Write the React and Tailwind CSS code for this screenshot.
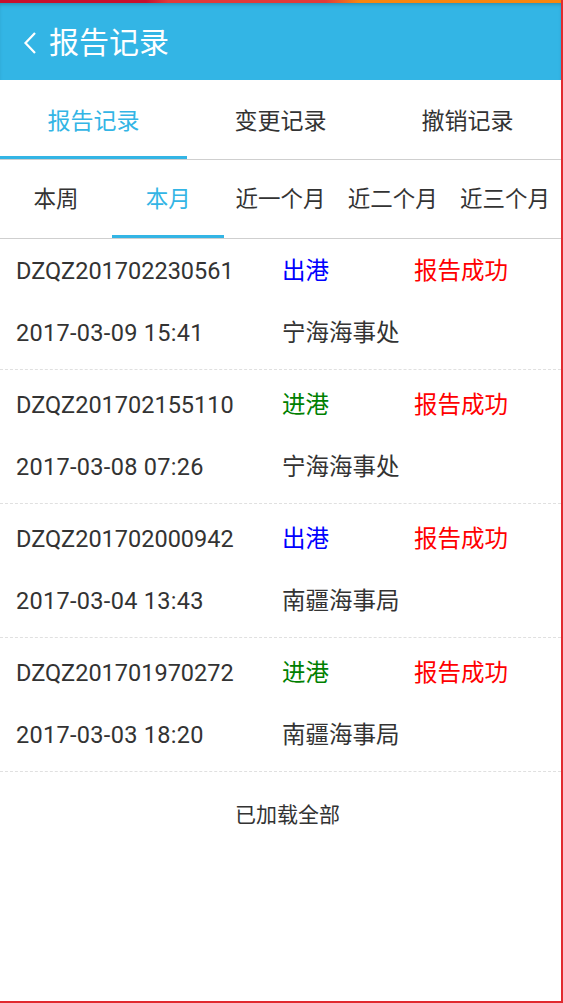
import React, { useState } from "react";

const records = [
  { id: "DZQZ201702230561", type: "出港", time: "2017-03-09 15:41", org: "宁海海事处" },
  { id: "DZQZ201702155110", type: "进港", time: "2017-03-08 07:26", org: "宁海海事处" },
  { id: "DZQZ201702000942", type: "出港", time: "2017-03-04 13:43", org: "南疆海事局" },
  { id: "DZQZ201701970272", type: "进港", time: "2017-03-03 18:20", org: "南疆海事局" },
];

const mainTabs = ["报告记录", "变更记录", "撤销记录"];
const rangeTabs = ["本周", "本月", "近一个月", "近二个月", "近三个月"];

const App = () => {
  const [mainTab, setMainTab] = useState(0);
  const [rangeTab, setRangeTab] = useState(1);

  return (
    <div
      className="w-[563px] h-[1003px] flex flex-col bg-white border-r-2 border-b-2 border-[#e12a2f] overflow-hidden"
      style={{ fontFamily: '"Roboto", "Noto Sans CJK SC", sans-serif' }}
    >
      {/* status strip */}
      <div className="h-[3px] shrink-0 bg-[linear-gradient(90deg,#c8102e_0%,#c8102e_26%,#e23a3a_30%,#e23a3a_58%,#f7860f_64%,#f7860f_100%)]" />

      {/* title bar */}
      <div className="h-[77px] shrink-0 flex items-center pt-[3px] bg-[#33b5e5] shadow-[inset_0_3px_4px_-2px_rgba(0,0,0,0.25)]">
        <button className="ml-[23px] mr-[12px] flex items-center">
          <svg width="14" height="22" viewBox="0 0 14 22" fill="none">
            <path d="M12 1 L2.5 11 L12 21" stroke="white" strokeWidth="2.2" />
          </svg>
        </button>
        <h1 className="text-[30px] text-white leading-none">报告记录</h1>
      </div>

      {/* main tabs */}
      <div className="h-[80px] shrink-0 flex border-b border-[#cfcfcf]">
        {mainTabs.map((t, i) => (
          <button
            key={t}
            onClick={() => setMainTab(i)}
            className={`flex-1 flex flex-col ${i === mainTab ? "text-[#33b5e5]" : "text-[#333]"}`}
          >
            <span className="flex-1 flex items-center justify-center text-[23px] pt-[8px]">{t}</span>
            <span className={`h-[3px] w-full ${i === mainTab ? "bg-[#33b5e5]" : ""}`} />
          </button>
        ))}
      </div>

      {/* range tabs */}
      <div className="h-[79px] shrink-0 flex border-b border-[#cfcfcf]">
        {rangeTabs.map((t, i) => (
          <button
            key={t}
            onClick={() => setRangeTab(i)}
            className={`flex-1 flex flex-col ${i === rangeTab ? "text-[#33b5e5]" : "text-[#333]"}`}
          >
            <span className="flex-1 flex items-center justify-center text-[22.5px] pt-[5px]">{t}</span>
            <span className={`h-[3px] w-full ${i === rangeTab ? "bg-[#33b5e5]" : ""}`} />
          </button>
        ))}
      </div>

      {/* record list */}
      <div className="flex flex-col">
        {records.map((r, i) => (
          <div
            key={r.id}
            className={`flex flex-col ${i === 0 ? "pt-[2px] pb-[4px]" : "pt-[5px] pb-[4px]"} border-b border-dashed border-[#e0e0e0] text-[23.5px] text-[#333]`}
          >
            <div className="h-[62px] flex items-center">
              <span className="w-[282px] pl-[16px]">{r.id}</span>
              <span className={`w-[132px] ${r.type === "出港" ? "text-[#0000ff]" : "text-[#008000]"}`}>{r.type}</span>
              <span className="text-[#ff0000]">报告成功</span>
            </div>
            <div className="h-[62px] flex items-center">
              <span className="w-[282px] pl-[16px] tracking-[0.3px]">{r.time}</span>
              <span>{r.org}</span>
            </div>
          </div>
        ))}
      </div>

      {/* footer */}
      <div className="h-[86px] flex items-center justify-center pl-[14px] pt-[2px] text-[21px] text-[#333]">
        已加载全部
      </div>
    </div>
  );
};

export default App;
